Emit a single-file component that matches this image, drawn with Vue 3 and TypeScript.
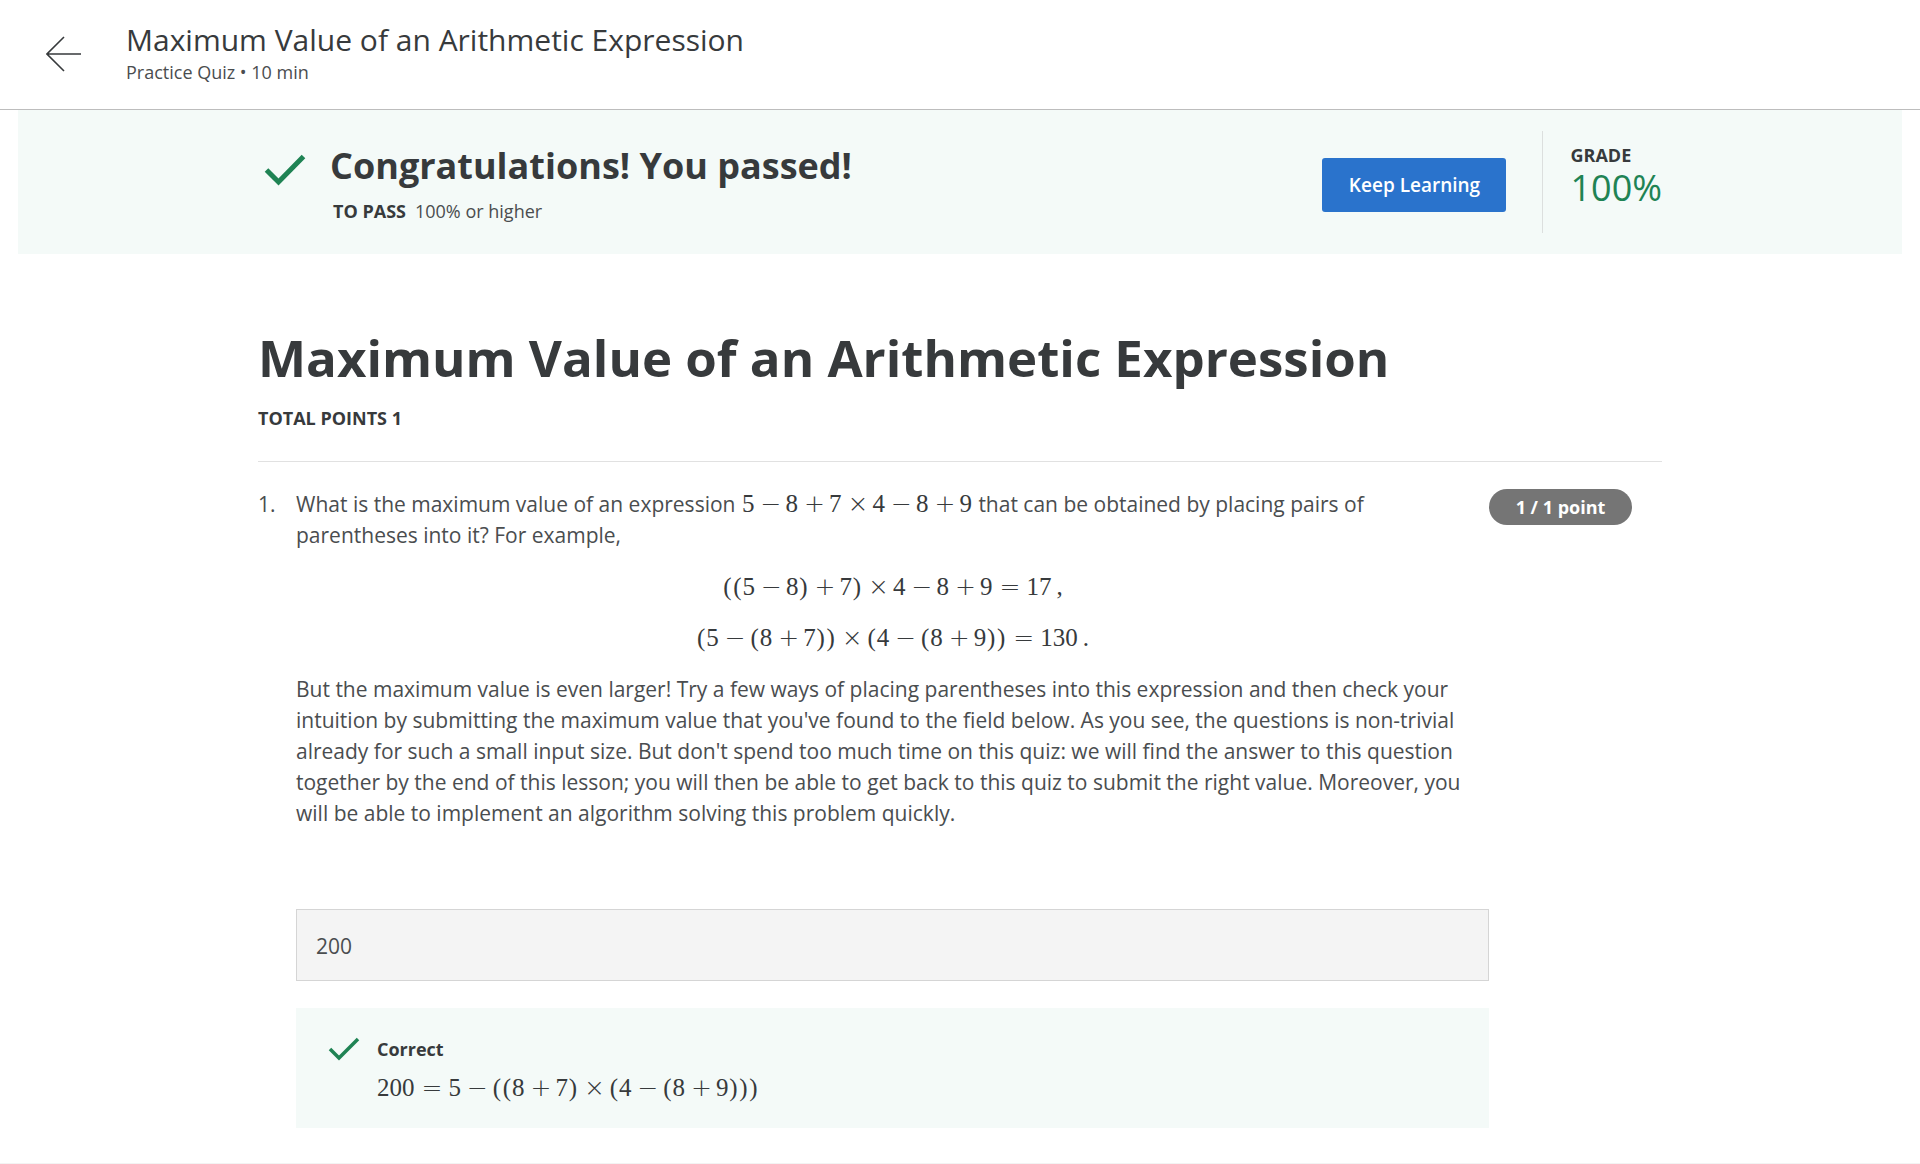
<script setup lang="ts">
import { ref } from 'vue'

type Kind = 'num' | 'par' | 'op' | 'rel' | 'punct'
interface Token { kind: Kind; text: string }

const title = 'Maximum Value of an Arithmetic Expression'
const answer = ref('200')

function tokens(source: string): Token[] {
  return (source.match(/\d+|./g) ?? [])
    .filter((t) => t !== ' ')
    .map((text) => {
      let kind: Kind = 'op'
      if (/\d/.test(text)) kind = 'num'
      else if (/[()]/.test(text)) kind = 'par'
      else if (text === '=') kind = 'rel'
      else if (/[.,]/.test(text)) kind = 'punct'
      return { kind, text }
    })
}

const expression = tokens('5 − 8 + 7 × 4 − 8 + 9')
const examples = [
  tokens('((5 − 8) + 7) × 4 − 8 + 9 = 17 ,'),
  tokens('(5 − (8 + 7)) × (4 − (8 + 9)) = 130 .'),
]
const solution = tokens('200 = 5 − ((8 + 7) × (4 − (8 + 9)))')
</script>

<template>
  <div class="page">
    <header class="topbar">
      <a class="back" href="#" aria-label="Back">
        <svg width="36" height="36" viewBox="0 0 36 36" fill="none" stroke="#373a3c" stroke-width="1.6">
          <path d="M18 1 L1 18 L18 35 M1 18 H35" />
        </svg>
      </a>
      <div>
        <div class="topbar-title">{{ title }}</div>
        <div class="topbar-sub">Practice Quiz • 10 min</div>
      </div>
    </header>

    <section class="banner">
      <div class="column banner-row">
        <svg class="banner-check" width="42" height="32" viewBox="0 0 42 32" fill="none" stroke="#1f8354" stroke-width="5">
          <path d="M2.5 16 L14.5 28 L39.500 2.500" />
        </svg>
        <div class="result">
          <h2>Congratulations! You passed!</h2>
          <p><strong>TO PASS</strong>100% or higher</p>
        </div>
        <button type="button" class="keep">Keep Learning</button>
        <div class="grade">
          <div class="grade-label">GRADE</div>
          <div class="grade-value">100%</div>
        </div>
      </div>
    </section>

    <main class="column">
      <h1>{{ title }}</h1>
      <div class="points">TOTAL POINTS 1</div>

      <div class="question">
        <div class="number">1.</div>
        <div class="body">
          <p>
            What is the maximum value of an expression
            <span class="math inline"><span v-for="(t, i) in expression" :key="i" :class="t.kind">{{ t.text }}</span></span>
            that can be obtained by placing pairs of
            <span>parentheses into it? For example,</span>
          </p>
          <div class="examples">
            <div v-for="(line, n) in examples" :key="n">
              <span class="math"><span v-for="(t, i) in line" :key="i" :class="t.kind">{{ t.text }}</span></span>
            </div>
          </div>
          <p>
            But the maximum value is even larger! Try a few ways of placing parentheses into this expression and then
            check your intuition by submitting the maximum value that you've found to the field below. As you see, the
            questions is non-trivial already for such a small input size. But don't spend too much time on this quiz: we
            will find the answer to this question together by the end of this lesson; you will then be able to get back
            to this quiz to submit the right value. Moreover, you will be able to implement an algorithm solving this
            problem quickly.
          </p>
          <input v-model="answer" class="answer" type="text" aria-label="Your answer" readonly />
          <div class="feedback">
            <svg width="32" height="24" viewBox="0 0 32 24" fill="none" stroke="#1f8354" stroke-width="3.500">
              <path d="M2 12 L11 21 L30 2" />
            </svg>
            <div>
              <div class="verdict">Correct</div>
              <span class="math"><span v-for="(t, i) in solution" :key="i" :class="t.kind">{{ t.text }}</span></span>
            </div>
          </div>
        </div>
        <div class="score"><span class="pill">1 / 1 point</span></div>
      </div>
    </main>
    <footer class="end"></footer>
  </div>
</template>

<style>
body {
  background: #fff;
}
</style>

<style scoped>
.page {
  font-family: 'Open Sans', 'Noto Sans', sans-serif;
  font-size: 21px;
  line-height: 31px;
  font-weight: 400;
  color: #373a3c;
}
h1,
h2,
p {
  margin: 0;
}
svg {
  display: block;
  flex: none;
}
.topbar {
  display: flex;
  align-items: flex-start;
  box-sizing: border-box;
  padding: 21px 46px 24px;
  gap: 44px;
  border-bottom: 1px solid #bdbdbd;
}
.back {
  padding-top: 15px;
}
.topbar-title {
  font-size: 30px;
  line-height: 38px;
}
.topbar-sub {
  font-size: 18px;
  line-height: 26px;
  color: #4a4d4f;
}
.column {
  box-sizing: border-box;
  max-width: 1404px;
  margin: 0 auto;
}
.banner {
  margin: 0 18px;
  padding: 21px 0;
  background: #f4faf8;
}
.banner-row {
  display: flex;
  align-items: flex-start;
}
.banner-check {
  margin: 23px 24px 0 6px;
}
.result {
  flex: 1;
  padding-top: 10px;
}
.result h2 {
  font-size: 36px;
  line-height: 50px;
  font-weight: 700;
}
.result p {
  padding: 6px 0 0 3px;
  font-size: 18px;
  line-height: 28px;
  color: #4a4d4f;
}
.result strong {
  margin-right: 9px;
  font-weight: 700;
  color: #373a3c;
}
.keep {
  width: 184px;
  height: 54px;
  margin-top: 27px;
  border: 0;
  border-radius: 3px;
  background: #2a73cc;
  color: #fff;
  font: 600 19px/30px 'Open Sans', sans-serif;
}
.grade {
  box-sizing: border-box;
  height: 102px;
  margin-left: 36px;
  padding: 12px 0 0 27px;
  border-left: 1px solid #dcdfde;
}
.grade-label {
  font-size: 18px;
  line-height: 25px;
  font-weight: 700;
}
.grade-value {
  font-size: 36px;
  line-height: 40px;
  color: #1f8354;
}
h1 {
  padding-top: 68px;
  font-size: 51px;
  line-height: 70px;
  font-weight: 700;
}
.points {
  padding: 11px 0 27px;
  border-bottom: 1px solid #e1e1e1;
  font-size: 18px;
  font-weight: 700;
}
.question {
  display: flex;
  padding-top: 27px;
  color: #4a4d4f;
}
.number {
  width: 38px;
}
.body {
  flex: 1;
  min-width: 0;
}
.body > p {
  padding-right: 20px;
}
.examples {
  display: flex;
  flex-direction: column;
  gap: 20px;
  padding: 21px 0 20px;
  text-align: center;
}
.math {
  font-family: 'Liberation Serif', serif;
  font-size: 25px;
  font-weight: 400;
  line-height: 1;
  white-space: nowrap;
  color: #373a3c;
}
.math.inline {
  margin: 0 1px;
}
.math > span {
  display: inline-block;
}
.math .par {
  width: 10px;
  text-align: center;
}
.math .op,
.math .rel {
  width: 19px;
  margin: 0 6px;
  font-family: 'DejaVu Sans', sans-serif;
  font-weight: 200;
  text-align: center;
}
.math .rel {
  width: 20px;
  margin: 0 7px;
}
.math .punct {
  margin-left: 5px;
}
.answer {
  display: block;
  box-sizing: border-box;
  width: 100%;
  height: 72px;
  margin-top: 80px;
  padding: 2px 19px 0;
  border: 1px solid #d5d5d5;
  border-radius: 0;
  background: #f4f4f4;
  color: #4a4d4f;
  font: 400 21px/31px 'Open Sans', sans-serif;
}
.feedback {
  display: flex;
  gap: 17px;
  box-sizing: border-box;
  min-height: 120px;
  margin-top: 27px;
  padding: 29px 32px 0;
  background: #f4faf8;
}
.verdict {
  padding-bottom: 12px;
  font-size: 18px;
  line-height: 24px;
  font-weight: 700;
  color: #373a3c;
}
.score {
  width: 173px;
}
.pill {
  display: block;
  width: 143px;
  border-radius: 18px;
  background: #757575;
  color: #fff;
  font-size: 18px;
  line-height: 36px;
  font-weight: 700;
  text-align: center;
}
.end {
  margin-top: 35px;
  border-top: 1px solid #f3f3f3;
}
</style>
